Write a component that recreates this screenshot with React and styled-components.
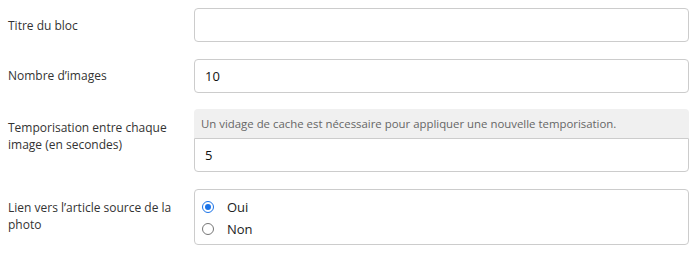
import React from 'react';
import styled, { createGlobalStyle } from 'styled-components';

const GlobalStyle = createGlobalStyle`
  body {
    margin: 0;
    background: #fff;
    font-family: "Open Sans", "Liberation Sans", sans-serif;
    color: #333;
  }
`;

const Form = styled.form`
  display: flex;
  flex-direction: column;
  gap: 16.5px;
  padding: 8px 11px 0 8px;
`;

const Row = styled.div`
  display: grid;
  grid-template-columns: 186px 1fr;
  align-items: ${(p) => (p.center ? 'center' : 'start')};
`;

const Label = styled.label`
  font-size: 12px;
  line-height: 17px;
  color: #333;
  padding-top: ${(p) => p.offset || 0}px;
  padding-right: 8px;
`;

const Input = styled.input`
  box-sizing: border-box;
  width: 100%;
  height: 34px;
  border: 1px solid #ccc;
  border-radius: 4px;
  padding: 0 10px;
  font-family: inherit;
  font-size: 13px;
  font-weight: 500;
  color: #111;
  outline: none;
  ${(p) => p.attached && 'border-top-left-radius: 0; border-top-right-radius: 0;'}
`;

const Group = styled.div`
  display: flex;
  flex-direction: column;
`;

const Help = styled.div`
  box-sizing: border-box;
  height: 29px;
  display: flex;
  align-items: center;
  padding: 0 7px;
  background: #f0f0f0;
  border-radius: 4px 4px 0 0;
  font-size: 11.4px;
  color: #666;
`;

const RadioBox = styled.div`
  box-sizing: border-box;
  height: 56px;
  border: 1px solid #ccc;
  border-radius: 4px;
  padding: 6px 7px 4px 7px;
  display: flex;
  flex-direction: column;
`;

const Choice = styled.label`
  display: flex;
  align-items: center;
  gap: 13px;
  height: 22px;
  font-size: 13px;
  color: #222;
`;

const Dot = styled.span`
  box-sizing: border-box;
  width: 12px;
  height: 12px;
  border-radius: 50%;
  border: ${(p) => (p.checked ? '1.5px solid #1a73e8' : '1.5px solid #767676')};
  display: flex;
  align-items: center;
  justify-content: center;
  &::after {
    content: '';
    width: 6px;
    height: 6px;
    border-radius: 50%;
    background: ${(p) => (p.checked ? '#1a73e8' : 'transparent')};
  }
`;

export default function App() {
  return (
    <>
      <GlobalStyle />
      <Form>
        <Row center>
          <Label>Titre du bloc</Label>
          <Input defaultValue="" />
        </Row>
        <Row center>
          <Label>Nombre d’images</Label>
          <Input defaultValue="10" />
        </Row>
        <Row>
          <Label offset={10}>Temporisation entre chaque image (en secondes)</Label>
          <Group>
            <Help>Un vidage de cache est nécessaire pour appliquer une nouvelle temporisation.</Help>
            <Input attached defaultValue="5" />
          </Group>
        </Row>
        <Row>
          <Label offset={10}>Lien vers l’article source de la photo</Label>
          <RadioBox>
            <Choice><Dot checked />Oui</Choice>
            <Choice><Dot />Non</Choice>
          </RadioBox>
        </Row>
      </Form>
    </>
  );
}
